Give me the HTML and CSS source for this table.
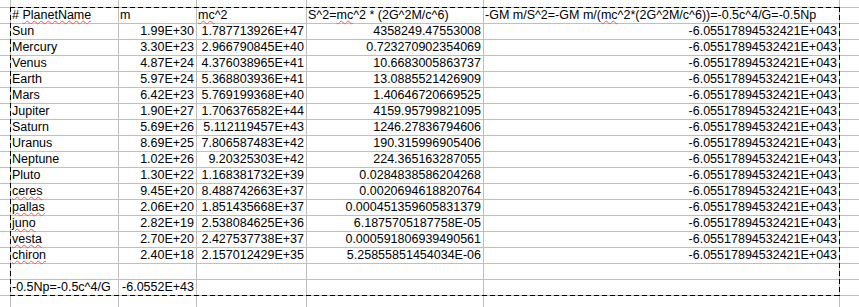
FILE: index.html
```html
<!DOCTYPE html>
<html lang="en">
<head>
<meta charset="UTF-8" />
<title>Planets</title>
<link rel="stylesheet" href="styles.css">
</head>
<body>

<div class="sheet">
  <table class="grid">
    <colgroup>
      <col class="c-a"><col class="c-b"><col class="c-c"><col class="c-d"><col class="c-e"><col class="c-f"><col class="c-g">
    </colgroup>
    <tr class="edge"><td></td><td></td><td></td><td></td><td></td><td></td><td></td></tr>
    <tr>
      <td></td>
      <td># <span class="typo">PlanetName</span></td>
      <td>m</td>
      <td><span class="typo">mc</span>^2</td>
      <td>S^2=<span class="typo">mc</span>^2 * (2G^2M/c^6)</td>
      <td>-GM m/S^2=-GM m/(<span class="typo">mc</span>^2*(2G^2M/c^6))=-0.5c^4/G=-0.5Np</td>
      <td></td>
    </tr>
    <tr><td></td><td>Sun</td><td class="num">1.99E+30</td><td class="num">1.787713926E+47</td><td class="num">4358249.47553008</td><td class="num">-6.05517894532421E+043</td><td></td></tr>
    <tr><td></td><td>Mercury</td><td class="num">3.30E+23</td><td class="num">2.966790845E+40</td><td class="num">0.723270902354069</td><td class="num">-6.05517894532421E+043</td><td></td></tr>
    <tr><td></td><td>Venus</td><td class="num">4.87E+24</td><td class="num">4.376038965E+41</td><td class="num">10.6683005863737</td><td class="num">-6.05517894532421E+043</td><td></td></tr>
    <tr><td></td><td>Earth</td><td class="num">5.97E+24</td><td class="num">5.368803936E+41</td><td class="num">13.0885521426909</td><td class="num">-6.05517894532421E+043</td><td></td></tr>
    <tr><td></td><td>Mars</td><td class="num">6.42E+23</td><td class="num">5.769199368E+40</td><td class="num">1.40646720669525</td><td class="num">-6.05517894532421E+043</td><td></td></tr>
    <tr><td></td><td>Jupiter</td><td class="num">1.90E+27</td><td class="num">1.706376582E+44</td><td class="num">4159.95799821095</td><td class="num">-6.05517894532421E+043</td><td></td></tr>
    <tr><td></td><td>Saturn</td><td class="num">5.69E+26</td><td class="num">5.112119457E+43</td><td class="num">1246.27836794606</td><td class="num">-6.05517894532421E+043</td><td></td></tr>
    <tr><td></td><td>Uranus</td><td class="num">8.69E+25</td><td class="num">7.806587483E+42</td><td class="num">190.315996905406</td><td class="num">-6.05517894532421E+043</td><td></td></tr>
    <tr><td></td><td>Neptune</td><td class="num">1.02E+26</td><td class="num">9.20325303E+42</td><td class="num">224.365163287055</td><td class="num">-6.05517894532421E+043</td><td></td></tr>
    <tr><td></td><td>Pluto</td><td class="num">1.30E+22</td><td class="num">1.168381732E+39</td><td class="num">0.0284838586204268</td><td class="num">-6.05517894532421E+043</td><td></td></tr>
    <tr><td></td><td><span class="typo">ceres</span></td><td class="num">9.45E+20</td><td class="num">8.488742663E+37</td><td class="num">0.0020694618820764</td><td class="num">-6.05517894532421E+043</td><td></td></tr>
    <tr><td></td><td><span class="typo">pallas</span></td><td class="num">2.06E+20</td><td class="num">1.851435668E+37</td><td class="num">0.000451359605831379</td><td class="num">-6.05517894532421E+043</td><td></td></tr>
    <tr><td></td><td><span class="typo">juno</span></td><td class="num">2.82E+19</td><td class="num">2.538084625E+36</td><td class="num">6.1875705187758E-05</td><td class="num">-6.05517894532421E+043</td><td></td></tr>
    <tr><td></td><td><span class="typo">vesta</span></td><td class="num">2.70E+20</td><td class="num">2.427537738E+37</td><td class="num">0.000591806939490561</td><td class="num">-6.05517894532421E+043</td><td></td></tr>
    <tr><td></td><td><span class="typo">chiron</span></td><td class="num">2.40E+18</td><td class="num">2.157012429E+35</td><td class="num">5.25855851454034E-06</td><td class="num">-6.05517894532421E+043</td><td></td></tr>
    <tr><td></td><td></td><td></td><td></td><td></td><td></td><td></td></tr>
    <tr><td></td><td>-0.5Np=-0.5c^4/G</td><td class="num">-6.0552E+43</td><td></td><td></td><td></td><td></td></tr>
    <tr><td></td><td></td><td></td><td></td><td></td><td></td><td></td></tr>
  </table>
  <div class="marquee"></div>
</div>

</body>
</html>
```

FILE: styles.css
```css
html, body { margin: 0; padding: 0; background: #fff; }
body { font-family: "Liberation Sans", Arial, sans-serif; font-size: 12.5px; color: #000; }

.sheet { position: relative; width: 859px; height: 307px; overflow: hidden; }

.grid { table-layout: fixed; width: 902px; border-collapse: separate; border-spacing: 1px; background: #c0c0c0; margin: -1px 0 0 -1px; }
.grid td { background: #fff; height: 15px; padding: 0 2px 0 1px; line-height: 15px; white-space: nowrap; }
.grid .edge td { height: 7px; padding: 0; }
.grid .num { text-align: right; }

.c-a { width: 10px; }
.c-b { width: 107px; }
.c-c { width: 77px; }
.c-d { width: 109px; }
.c-e { width: 176px; }
.c-f { width: 355px; }
.c-g { width: 60px; }

.typo { text-decoration-line: underline; text-decoration-style: wavy; text-decoration-color: #f05a5a; text-decoration-thickness: 1px; text-underline-offset: 1px; }

/* copy selection marquee */
.marquee {
  position: absolute; left: 10px; top: 7px; width: 830px; height: 289px; pointer-events: none;
  background:
    repeating-linear-gradient(90deg, #000 0 5px, transparent 5px 8px) left top / 100% 1px no-repeat,
    repeating-linear-gradient(90deg, #000 0 5px, transparent 5px 8px) left bottom / 100% 1px no-repeat,
    repeating-linear-gradient(180deg, #000 0 5px, transparent 5px 8px) left top / 1px 100% no-repeat,
    repeating-linear-gradient(180deg, #000 0 5px, transparent 5px 8px) right top / 1px 100% no-repeat;
}
```
